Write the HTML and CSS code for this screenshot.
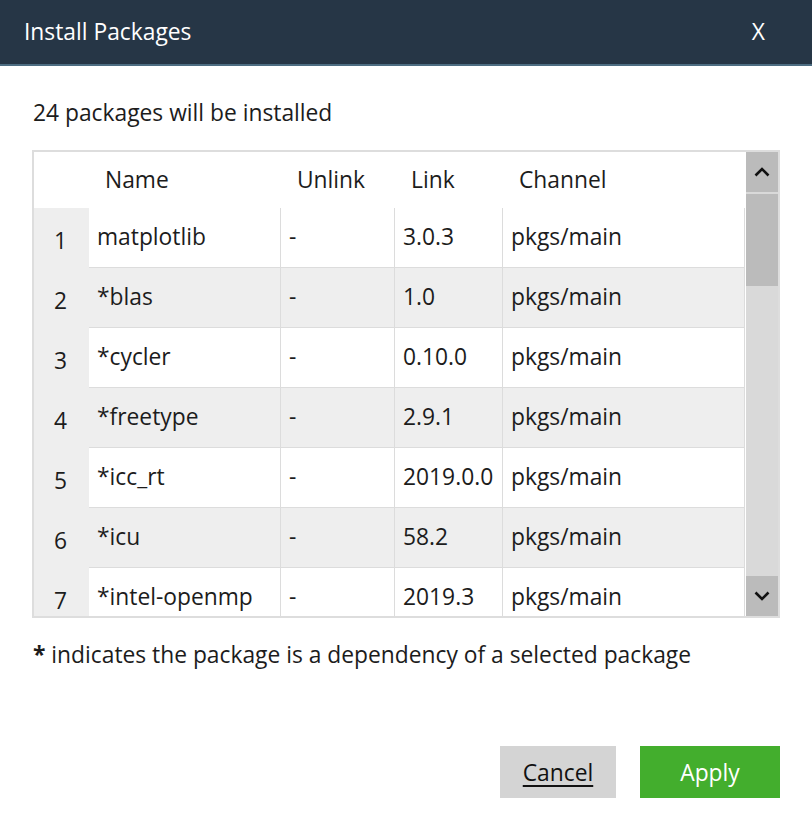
FILE: index.html
```html
<!DOCTYPE html>
<html lang="en">
<head>
<meta charset="utf-8">
<title>Install Packages</title>
<link rel="stylesheet" href="styles.css">
</head>
<body>
<div class="dialog">
  <header class="titlebar">
    <span class="title">Install Packages</span>
    <span class="close">X</span>
  </header>
  <main class="content">
    <p class="summary">24 packages will be installed</p>
    <div class="table-frame">
      <div class="table-view">
        <div class="row head">
          <div class="idx"></div>
          <div class="cell">Name</div>
          <div class="cell">Unlink</div>
          <div class="cell">Link</div>
          <div class="cell">Channel</div>
        </div>
        <div class="row">
          <div class="idx">1</div><div class="cell">matplotlib</div><div class="cell">-</div><div class="cell">3.0.3</div><div class="cell">pkgs/main</div>
        </div>
        <div class="row alt">
          <div class="idx">2</div><div class="cell">*blas</div><div class="cell">-</div><div class="cell">1.0</div><div class="cell">pkgs/main</div>
        </div>
        <div class="row">
          <div class="idx">3</div><div class="cell">*cycler</div><div class="cell">-</div><div class="cell">0.10.0</div><div class="cell">pkgs/main</div>
        </div>
        <div class="row alt">
          <div class="idx">4</div><div class="cell">*freetype</div><div class="cell">-</div><div class="cell">2.9.1</div><div class="cell">pkgs/main</div>
        </div>
        <div class="row">
          <div class="idx">5</div><div class="cell">*icc_rt</div><div class="cell">-</div><div class="cell">2019.0.0</div><div class="cell">pkgs/main</div>
        </div>
        <div class="row alt">
          <div class="idx">6</div><div class="cell">*icu</div><div class="cell">-</div><div class="cell">58.2</div><div class="cell">pkgs/main</div>
        </div>
        <div class="row">
          <div class="idx">7</div><div class="cell">*intel-openmp</div><div class="cell">-</div><div class="cell">2019.3</div><div class="cell">pkgs/main</div>
        </div>
      </div>
      <div class="scrollbar">
        <div class="sb-btn">
          <svg width="16" height="10" viewBox="0 0 16 10"><polyline points="1.5,8.5 8,2 14.5,8.5" fill="none" stroke="#111" stroke-width="2.6"/></svg>
        </div>
        <div class="sb-track">
          <div class="sb-thumb"></div>
        </div>
        <div class="sb-btn">
          <svg width="16" height="10" viewBox="0 0 16 10"><polyline points="1.5,1.5 8,8 14.5,1.5" fill="none" stroke="#111" stroke-width="2.6"/></svg>
        </div>
      </div>
    </div>
    <p class="note"><b>*</b> indicates the package is a dependency of a selected package</p>
    <div class="actions">
      <button class="btn cancel" type="button">Cancel</button>
      <button class="btn apply" type="button">Apply</button>
    </div>
  </main>
</div>
</body>
</html>
```
FILE: styles.css
```css
* { box-sizing: border-box; }
html, body { margin: 0; padding: 0; background: #fff; }
body {
  font-family: "Open Sans", "Noto Sans", sans-serif;
  font-size: 22.8px;
  color: #1c1c1c;
  width: 812px;
  height: 830px;
  overflow: hidden;
}
.dialog { width: 812px; height: 830px; display: flex; flex-direction: column; }
.titlebar {
  height: 66px;
  background: #263646;
  border-bottom: 2px solid #4d6d82;
  display: flex;
  align-items: center;
  justify-content: space-between;
  padding: 0 47px 0 24px;
  color: #fff;
}
.title { line-height: 30px; }
.close { line-height: 30px; }
.content { padding: 0 32px; display: flex; flex-direction: column; }
.summary { margin: 32px 0 0 1px; line-height: 30px; height: 30px; }
.table-frame {
  margin-top: 22px;
  height: 468px;
  border: 2px solid #dddddd;
  display: flex;
  background: #fff;
}
.table-view { width: 712px; height: 464px; overflow: hidden; }
.row {
  display: grid;
  grid-template-columns: 55px 192px 114px 108px 242px;
  height: 60px;
}
.row.head { height: 56px; background: #eeeeee; grid-template-columns: 55px 192px 114px 108px 243px; }
.row.head .idx { background: #fff; }
.row.head .cell { border: 0; padding-left: 16px; padding-bottom: 2px; }
.row.alt .cell { background: #eeeeee; }
.idx {
  background: #eeeeee;
  display: flex;
  align-items: center;
  justify-content: center;
  padding-top: 4px;
  padding-right: 2px;
}
.cell {
  display: flex;
  align-items: center;
  padding-left: 8px;
  padding-bottom: 3px;
  white-space: nowrap;
  border-right: 1px solid #dcdcdc;
  border-bottom: 1px solid #dcdcdc;
  background: #fff;
}
.scrollbar {
  width: 32px;
  height: 464px;
  display: flex;
  flex-direction: column;
  background: #d9d9d9;
}
.sb-btn {
  height: 40px;
  background: #bbbbbb;
  display: flex;
  align-items: center;
  justify-content: center;
}
.sb-track { flex: 1; padding-top: 2px; }
.sb-thumb { height: 92px; background: #bbbbbb; }
.note { margin: 22px 0 0 1px; line-height: 30px; }
.note b { font-weight: 700; }
.actions {
  margin-top: 76px;
  display: flex;
  justify-content: flex-end;
  gap: 24px;
}
.btn {
  font-family: inherit;
  font-size: 22.8px;
  height: 52px;
  border: 0;
  border-radius: 0;
  padding: 0;
}
.cancel { width: 116px; background: #d4d4d4; color: #111; text-decoration: underline; text-underline-offset: 4px; }
.apply { width: 140px; background: #43ae2d; color: #fff; }
```
